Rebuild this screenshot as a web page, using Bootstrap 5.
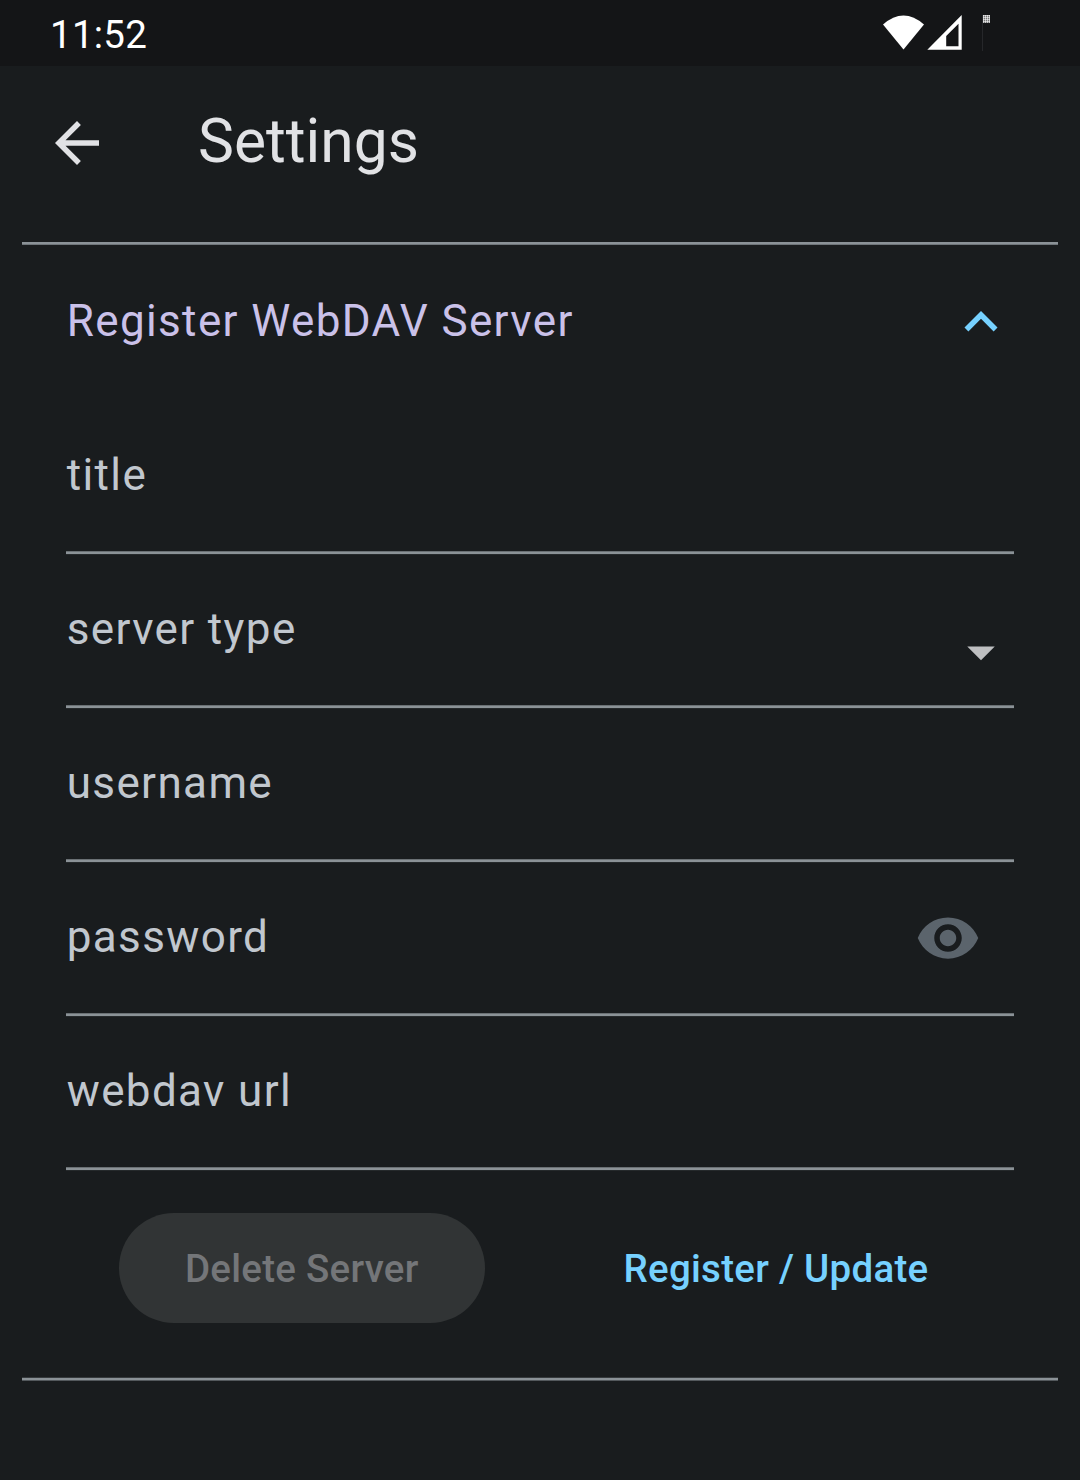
<!DOCTYPE html>
<html lang="en" data-bs-theme="dark">
<head>
<meta charset="utf-8">
<meta name="viewport" content="width=device-width, initial-scale=1">
<title>Settings</title>
<link href="https://cdn.jsdelivr.net/npm/bootstrap@5.3.0/dist/css/bootstrap.min.css" rel="stylesheet">
<style>
  :root { --surface:#191c1e; --outline:#8b9297; }
  body { background:var(--surface); font-family:Roboto,"Noto Sans",sans-serif; height:1480px; overflow:hidden; }
  svg { display:block; flex:none; }
  .status-bar { height:66px; background:#141517; color:#fff; padding:3px 89px 0 50px; }
  .clock { font-size:38.5px; line-height:64px; letter-spacing:.25px; }
  .top-bar { height:176px; padding:0 44px; }
  .top-bar h1 { font-size:60.5px; line-height:77px; margin:37px 0 0 88px; color:#e1e2e5; font-weight:400; }
  .back-btn { margin-top:44px; color:#e1e2e5; }
  .rule { height:3px; margin:0 22px; background:linear-gradient(var(--outline) 2px,#6f757a 2px); }
  .rule-end { height:4px; background:linear-gradient(#363a3d 1px,var(--outline) 1px 3px,#53585c 3px); }
  .section-head { height:156px; padding:0 66px 5px; color:#cac1e9; }
  .label-text { font-size:44px; line-height:66px; letter-spacing:1.375px; padding-left:.7px; }
  .line-field { height:154px; margin:0 66px; padding-bottom:6px; color:#c1c7ce; background:linear-gradient(#6a7074 1px,var(--outline) 1px 3px,#25292b 3px) bottom/100% 4px no-repeat; }
  .chevron { margin-top:2px; }
  .caret { margin-top:46px; }
  .eye { margin:2px 33px 0 0; }
  .action-row { padding:42px 0 54px 119px; gap:106px; }
  .pill { height:110px; border-radius:55px; font-size:38.5px; letter-spacing:.275px; font-weight:500; padding:2px 0 0; border:0; }
  .pill-delete, .pill-delete:disabled { width:365.5px; background:#313435; color:#747679; opacity:1; }
  .pill-register { width:371px; color:#76d1ff; }
</style>
</head>
<body>
<div class="status-bar d-flex justify-content-between align-items-start">
  <span class="clock">11:52</span>
  <svg width="110" height="52" viewBox="881 3 110 52" aria-hidden="true">
    <path fill="#fff" d="M883 24.5Q903.500 6.500 924 24.500L903.500 49.500Z"/>
    <path fill="#fff" fill-rule="evenodd" d="M927.300 49.700L961.700 15V49.700ZM946.200 36V46.300H958.500V23.800Z"/>
    <path stroke="#26272a" d="M982.500 15V51"/>
    <path fill="#fff" fill-opacity=".4" d="M983 15h7v8h-7z"/>
    <path stroke="#fff" stroke-width="8" stroke-dasharray="1 1" d="M983 19H990" opacity=".6"/>
    <path stroke="#fff" stroke-width="7" stroke-dasharray="1 1" d="M986.500 15V23" opacity=".5"/>
  </svg>
</div>
<header class="top-bar d-flex align-items-start">
  <button class="btn back-btn p-0 border-0" aria-label="Back">
    <svg width="66" height="66" viewBox="0 0 24 24" fill="currentColor"><path d="M20 11H7.830l5.590-5.590L12 4l-8 8 8 8 1.410-1.410L7.830 13H20v-2z"/></svg>
  </button>
  <h1>Settings</h1>
</header>
<div class="rule"></div>
<main>
  <div class="section-head d-flex justify-content-between align-items-center">
    <span class="label-text">Register WebDAV Server</span>
    <svg class="chevron" width="66" height="66" viewBox="0 0 24 24" fill="#76d1ff"><path d="M12 8l-6 6 1.410 1.410L12 10.830l4.590 4.580L18 14z"/></svg>
  </div>
  <form>
    <div class="line-field d-flex align-items-center"><span class="label-text">title</span></div>
    <div class="line-field d-flex align-items-center justify-content-between"><span class="label-text">server type</span>
      <svg class="caret" width="66" height="66" viewBox="0 0 24 24" fill="#bebfc1"><path d="M7 10l5 5 5-5z"/></svg></div>
    <div class="line-field d-flex align-items-center"><span class="label-text">username</span></div>
    <div class="line-field d-flex align-items-center justify-content-between"><span class="label-text">password</span>
      <svg class="eye" width="66" height="66" viewBox="0 0 24 24" fill="#5b646c"><path d="M12 4.500C7 4.500 2.730 7.610 1 12c1.730 4.390 6 7.500 11 7.500s9.270-3.110 11-7.500c-1.730-4.390-6-7.500-11-7.500zM12 17c-2.760 0-5-2.240-5-5s2.240-5 5-5 5 2.240 5 5-2.240 5-5 5zm0-8c-1.660 0-3 1.340-3 3s1.340 3 3 3 3-1.340 3-3-1.340-3-3-3z"/></svg></div>
    <div class="line-field d-flex align-items-center"><span class="label-text">webdav url</span></div>
    <div class="d-flex action-row">
      <button type="button" class="btn pill pill-delete" disabled>Delete Server</button>
      <button type="button" class="btn pill pill-register">Register / Update</button>
    </div>
  </form>
  <div class="rule rule-end"></div>
</main>
<script src="https://cdn.jsdelivr.net/npm/bootstrap@5.3.0/dist/js/bootstrap.bundle.min.js"></script>
</body>
</html>
